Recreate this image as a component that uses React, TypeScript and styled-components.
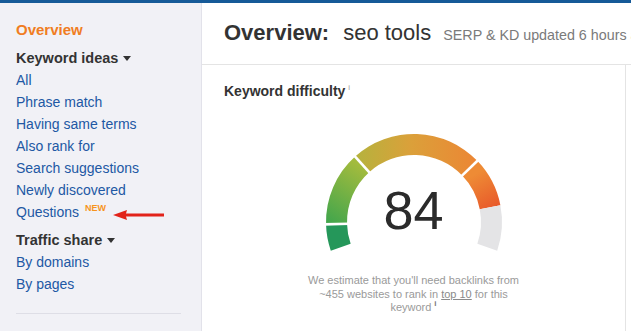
import styled, { createGlobalStyle } from "styled-components";

const GlobalStyle = createGlobalStyle`
  html, body {
    margin: 0;
    padding: 0;
    background: #ffffff;
  }
  body {
    font-family: "Liberation Sans", Arial, sans-serif;
    color: #333333;
    overflow: hidden;
  }
`;

// styled-components
const TopBar = styled.div`
  height: 3px;
  background: #165a98;
`;

const Layout = styled.div`
  display: flex;
  height: 328px;
`;

const Sidebar = styled.nav`
  width: 202px;
  flex-shrink: 0;
  box-sizing: border-box;
  padding: 16px 20px 0 16px;
  background: #f1f1f6;
  border-right: 1px solid #e2e2ea;
`;

const NavTitle = styled.div<{ $accent?: boolean }>`
  display: flex;
  align-items: center;
  margin-top: ${(p) => (p.$accent ? "0" : "6px")};
  font-size: ${(p) => (p.$accent ? "15px" : "14.5px")};
  line-height: 22px;
  font-weight: bold;
  color: ${(p) => (p.$accent ? "#f07d22" : "#333333")};
`;

const Caret = styled.span`
  width: 0;
  height: 0;
  margin-left: 5px;
  margin-top: 1px;
  border-left: 4px solid transparent;
  border-right: 4px solid transparent;
  border-top: 5px solid #333333;
`;

const NavLink = styled.div`
  display: flex;
  align-items: center;
  font-size: 14px;
  line-height: 22px;
  color: #2158a4;
`;

const NewBadge = styled.sup`
  align-self: flex-start;
  margin-left: 6px;
  margin-top: 1px;
  font-size: 9px;
  line-height: 12px;
  font-weight: bold;
  color: #f7941d;
`;

const PointerArrow = styled.svg`
  margin-left: 7px;
  margin-top: 6px;
`;

const Divider = styled.hr`
  margin: 18px 0 0 0;
  border: 0;
  border-top: 1px solid #dedee6;
`;

const Main = styled.main`
  flex: 1;
  display: flex;
  flex-direction: column;
  min-width: 0;
`;

const PageHeader = styled.header`
  height: 62px;
  box-sizing: border-box;
  display: flex;
  align-items: baseline;
  padding: 17px 0 0 22px;
  border-bottom: 1px solid #e4e4e4;
  white-space: nowrap;
  overflow: hidden;
`;

const PageTitle = styled.h1`
  margin: 0;
  font-size: 22px;
  line-height: 26px;
  font-weight: bold;
  color: #333333;
`;

const Keyword = styled.span`
  margin-left: 14px;
  font-size: 22px;
  line-height: 26px;
  color: #333333;
`;

const UpdatedNote = styled.span`
  margin-left: 12px;
  font-size: 14.3px;
  color: #7a7a7a;
`;

const CardsRow = styled.div`
  flex: 1;
  display: flex;
`;

const Card = styled.section`
  width: 424px;
  flex-shrink: 0;
  box-sizing: border-box;
  padding: 16px 22px 0 22px;
  border-right: 1px solid #e4e4e4;
  display: flex;
  flex-direction: column;
`;

const CardTitle = styled.h2`
  margin: 0;
  font-size: 14px;
  line-height: 20px;
  font-weight: bold;
  color: #333333;
`;

const InfoMark = styled.sup<{ $dark?: boolean }>`
  margin-left: 3px;
  font-size: 8px;
  line-height: 0;
  font-weight: ${(p) => (p.$dark ? "bold" : "normal")};
  color: ${(p) => (p.$dark ? "#777777" : "#9a9a9a")};
`;

const GaugeWrap = styled.div`
  position: relative;
  align-self: center;
  width: 190px;
  height: 124px;
  margin-top: 29px;
`;

const Score = styled.div`
  position: absolute;
  left: 0;
  right: 0;
  top: 53px;
  text-align: center;
  font-size: 54px;
  line-height: 54px;
  color: #2b2b2b;
`;

const Estimate = styled.p`
  align-self: center;
  width: 220px;
  margin: 20px 0 0 0;
  font-size: 11px;
  line-height: 13.5px;
  text-align: center;
  color: #9a9a9a;
`;

const Underlined = styled.span`
  text-decoration: underline;
  color: #8a8a8a;
`;

// gauge geometry
const CX = 95;
const CY = 92;
const R_OUT = 88;
const R_IN = 67;

function polar(angle: number, r: number) {
  const rad = (angle * Math.PI) / 180;
  return [CX + r * Math.cos(rad), CY - r * Math.sin(rad)];
}

function sector(from: number, to: number) {
  const large = from - to > 180 ? 1 : 0;
  const [x1, y1] = polar(from, R_OUT);
  const [x2, y2] = polar(to, R_OUT);
  const [x3, y3] = polar(to, R_IN);
  const [x4, y4] = polar(from, R_IN);
  return `M${x1} ${y1} A${R_OUT} ${R_OUT} 0 ${large} 1 ${x2} ${y2} L${x3} ${y3} A${R_IN} ${R_IN} 0 ${large} 0 ${x4} ${y4} Z`;
}

const segments = [
  { from: 199, to: 181.5, fill: "#25975a" },
  { from: 181.5, to: 132, fill: "url(#kdGreen)" },
  { from: 132, to: 44, fill: "url(#kdYellow)" },
  { from: 44, to: 11, fill: "url(#kdOrange)" },
  { from: 11, to: -19, fill: "#e4e4e6" },
];

const dividers = [181.5, 132, 44];

function Gauge({ value }: { value: number }) {
  return (
    <GaugeWrap>
      <svg width="190" height="124" viewBox="0 0 190 124">
        <defs>
          <linearGradient id="kdGreen" gradientUnits="userSpaceOnUse" x1="10" y1="92" x2="45" y2="38">
            <stop offset="0" stopColor="#43a64c" />
            <stop offset="1" stopColor="#a3bb3d" />
          </linearGradient>
          <linearGradient id="kdYellow" gradientUnits="userSpaceOnUse" x1="38" y1="30" x2="158" y2="30">
            <stop offset="0" stopColor="#b6b23d" />
            <stop offset="0.45" stopColor="#dba03a" />
            <stop offset="1" stopColor="#ec8634" />
          </linearGradient>
          <linearGradient id="kdOrange" gradientUnits="userSpaceOnUse" x1="160" y1="42" x2="180" y2="76">
            <stop offset="0" stopColor="#ee8b35" />
            <stop offset="1" stopColor="#e8582a" />
          </linearGradient>
        </defs>
        {segments.map((s) => (
          <path key={s.from} d={sector(s.from, s.to)} fill={s.fill} />
        ))}
        {dividers.map((a) => {
          const [x1, y1] = polar(a, R_IN - 2);
          const [x2, y2] = polar(a, R_OUT + 2);
          return <line key={a} x1={x1} y1={y1} x2={x2} y2={y2} stroke="#ffffff" strokeWidth="2.6" />;
        })}
      </svg>
      <Score>{value}</Score>
    </GaugeWrap>
  );
}

const keywordIdeas = [
  "All",
  "Phrase match",
  "Having same terms",
  "Also rank for",
  "Search suggestions",
  "Newly discovered",
];

const trafficShare = ["By domains", "By pages"];

function App() {
  return (
    <>
      <GlobalStyle />
      <TopBar />
      <Layout>
        <Sidebar>
          <NavTitle $accent>Overview</NavTitle>
          <NavTitle>
            Keyword ideas <Caret />
          </NavTitle>
          {keywordIdeas.map((item) => (
            <NavLink key={item}>{item}</NavLink>
          ))}
          <NavLink>
            Questions
            <NewBadge>NEW</NewBadge>
            <PointerArrow width="52" height="12" viewBox="0 0 52 12">
              <path d="M0 6 L14 1 L13 4.6 L51 4.6 L51 7.6 L13 7.6 L14 11 Z" fill="#e2231a" />
            </PointerArrow>
          </NavLink>
          <NavTitle>
            Traffic share <Caret />
          </NavTitle>
          {trafficShare.map((item) => (
            <NavLink key={item}>{item}</NavLink>
          ))}
          <Divider />
        </Sidebar>
        <Main>
          <PageHeader>
            <PageTitle>Overview:</PageTitle>
            <Keyword>seo tools</Keyword>
            <UpdatedNote>SERP &amp; KD updated 6 hours ago</UpdatedNote>
          </PageHeader>
          <CardsRow>
            <Card>
              <CardTitle>
                Keyword difficulty<InfoMark>i</InfoMark>
              </CardTitle>
              <Gauge value={84} />
              <Estimate>
                We estimate that you'll need backlinks from ~455 websites to rank in{" "}
                <Underlined>top 10</Underlined> for this keyword
                <InfoMark $dark>i</InfoMark>
              </Estimate>
            </Card>
          </CardsRow>
        </Main>
      </Layout>
    </>
  );
}

export default App;
